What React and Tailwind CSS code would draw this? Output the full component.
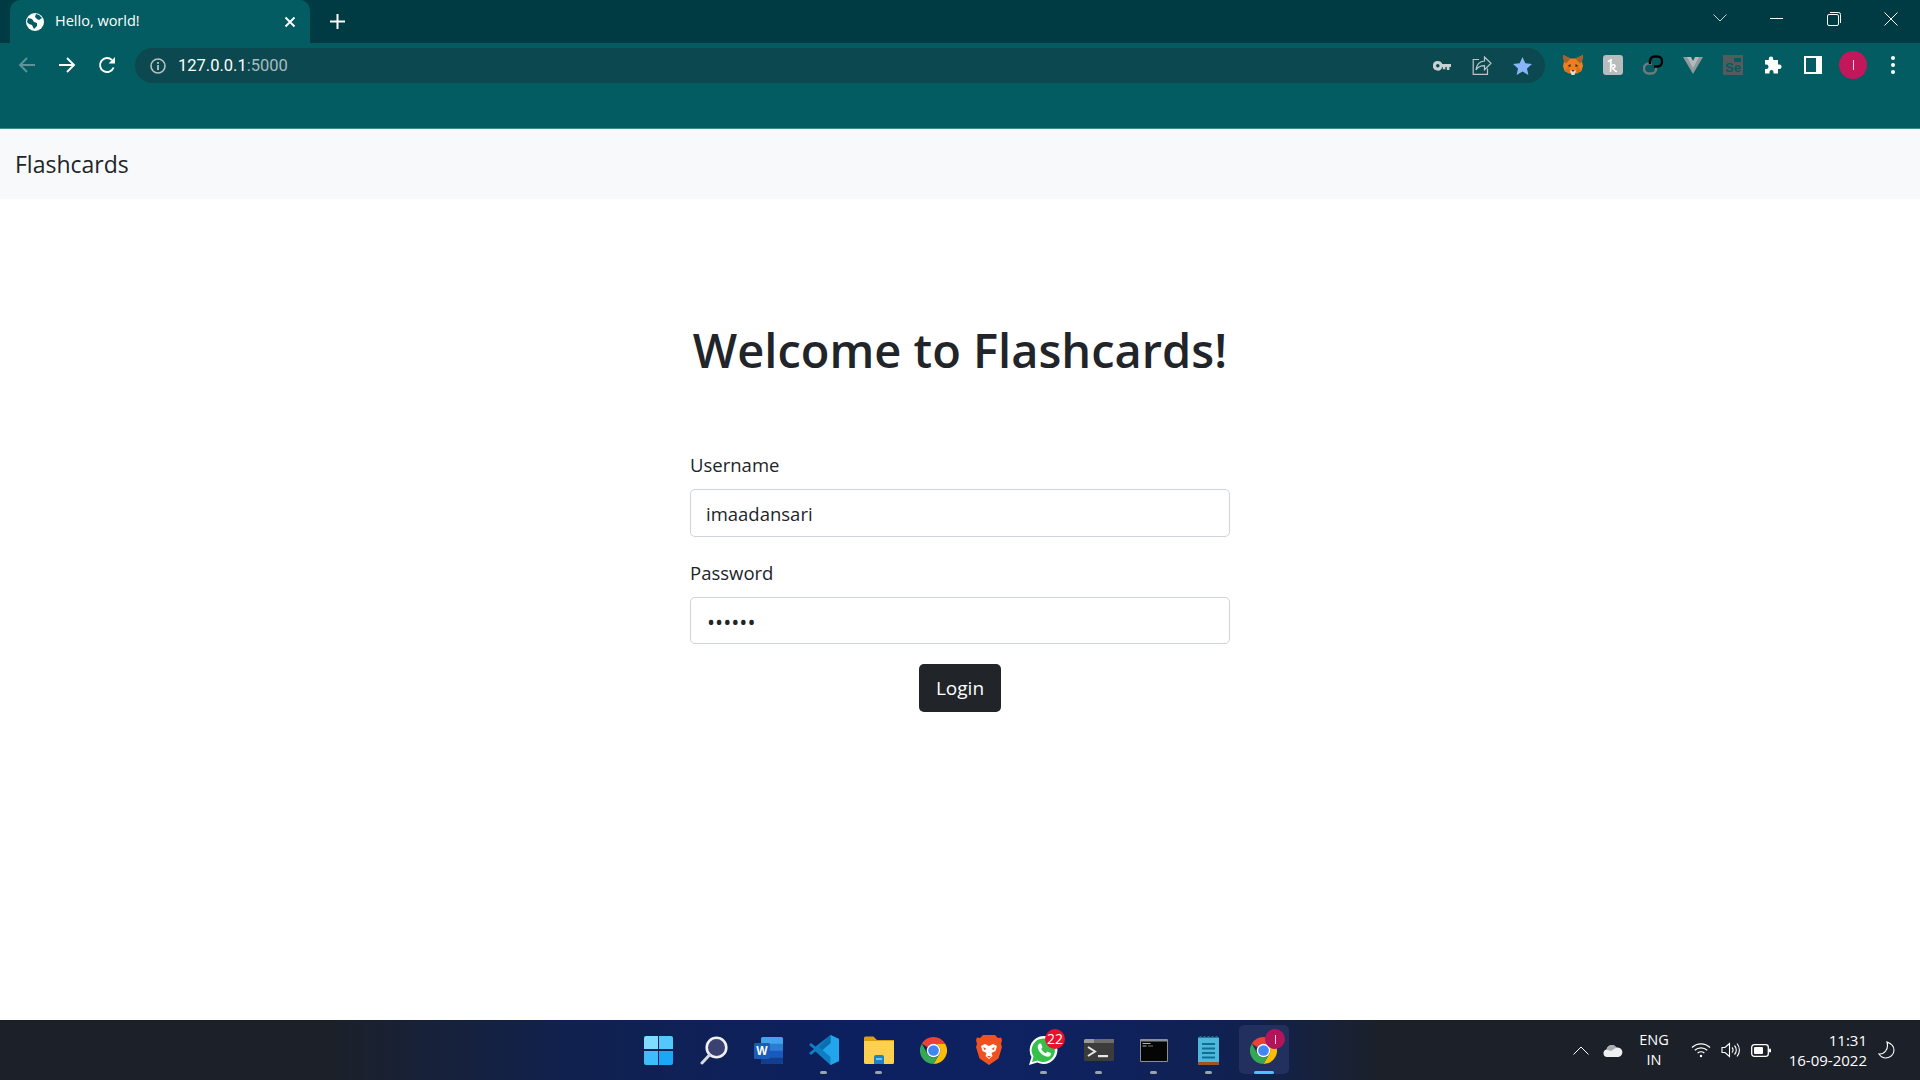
import React from "react";

function Btn({ children }) {
  return <div className="w-10 h-10 flex items-center justify-center shrink-0">{children}</div>;
}

function Back() {
  return (
    <svg width="18" height="18" viewBox="0 0 18 18" fill="none" stroke="#5f9398" strokeWidth="1.9">
      <path d="M17 9H2M9 2L2 9l7 7" />
    </svg>
  );
}
function Forward() {
  return (
    <svg width="18" height="18" viewBox="0 0 18 18" fill="none" stroke="#fff" strokeWidth="1.9">
      <path d="M1 9h15M9 2l7 7-7 7" />
    </svg>
  );
}
function Reload() {
  return (
    <svg width="18" height="18" viewBox="0 0 18 18" fill="none">
      <path d="M15.6 11.5A7 7 0 1 1 14 4.1" stroke="#fff" strokeWidth="1.9" />
      <path d="M17 1v6.4h-6.4z" fill="#fff" />
    </svg>
  );
}
function Globe() {
  return (
    <svg width="18" height="18" viewBox="0 0 18 18">
      <circle cx="9" cy="9" r="9" fill="#fff" />
      <path d="M2 5l4 1 2 3 3 1 0 3-3 3-2-4-3-1-2-2zM10 1l3 1 3 3-3 2-2-1-2-2z" fill="#035c62" />
    </svg>
  );
}
function Info() {
  return (
    <svg width="16" height="16" viewBox="0 0 16 16" fill="none">
      <circle cx="8" cy="8" r="7" stroke="#b4c2c4" strokeWidth="1.6" />
      <rect x="7.1" y="7" width="1.8" height="5" fill="#b4c2c4" />
      <rect x="7.1" y="4" width="1.8" height="1.8" fill="#b4c2c4" />
    </svg>
  );
}
function Key() {
  return (
    <svg width="18" height="10" viewBox="0 0 18 10">
      <path fillRule="evenodd" d="M4.8 0a4.8 4.8 0 0 1 4.5 3H18v3h-1.6v3h-2.6V6h-1.4v2.2H9.8V6h-.5a4.8 4.8 0 1 1-4.5-6zm0 3a1.8 1.8 0 1 0 0 3.6 1.8 1.8 0 0 0 0-3.6z" fill="#c8d0d1" />
    </svg>
  );
}
function Share() {
  return (
    <svg width="20" height="19" viewBox="0 0 20 19" fill="none" stroke="#b9c6c7" strokeWidth="1.2">
      <path d="M7 3.5H1.2v14.8h14.3V12.5" />
      <path d="M12.5 1v4C7.5 5.4 4.5 8.5 4 14c2-3.3 4.5-4.3 8.5-4.3v4L19 7.3z" />
    </svg>
  );
}
function Star() {
  return (
    <svg width="19" height="18" viewBox="0 0 19 18">
      <path d="M9.5 0l2.8 6.2 6.7.7-5 4.500 1.400 6.600-5.900-3.400L3.600 18 5 11.400 0 6.900l6.700-.7z" fill="#8ab4f8" />
    </svg>
  );
}
function Fox() {
  return (
    <svg width="20" height="20" viewBox="0 0 20 20">
      <path d="M0 0l7.500 3.500h5L20 0l-1 6.500 1 4.500-1.500 5-4.500 2.500H6L1.500 16 0 11l1-4.500z" fill="#ee7f1f" />
      <path d="M0 0l7.500 3.500L3 8.500 1 6.500zM20 0l-7.500 3.500 4.500 5 2-2z" fill="#a8612a" />
      <path d="M7.500 12L4.500 11l3-2zM12.500 12l3-1-3-2z" fill="#3a2a1d" />
      <path d="M7 15.500h6L11.500 20h-3z" fill="#e8dccf" />
      <path d="M8.500 15h3L10 17z" fill="#3a2a1d" />
      <path d="M1.500 16L6 11l1 7zM18.500 16L14 11l-1 7z" fill="#d9701a" />
    </svg>
  );
}
function HExt() {
  return (
    <div className="w-5 h-5 rounded-[3px] bg-[#b8bcbc] flex items-center justify-center">
      <svg width="12" height="15" viewBox="0 0 12 15" fill="none" stroke="#fff" strokeWidth="1.6">
        <path d="M1 4c1-2 2-2 4-2M4 1l-.5 13M3.500 9C5 6.500 8 6 8 8c0 1.500-2 2-3 2 2 .5 2.500 4 5 3.500" />
      </svg>
    </div>
  );
}
function LinkExt() {
  return (
    <svg width="20" height="20" viewBox="0 0 20 20" fill="none" strokeWidth="2.4">
      <path d="M13 11.500v2.500a4.500 4.500 0 0 1-4.500 4.500h-3A4.500 4.500 0 0 1 1 14v-1a4.500 4.500 0 0 1 4.500-4.500H9" stroke="#6f7a7c" />
      <path d="M7 9V6a4.500 4.500 0 0 1 4.500-4.500h3A4.500 4.500 0 0 1 19 6v1a4.500 4.500 0 0 1-4.500 4.500H11" stroke="#000" />
    </svg>
  );
}
function VExt() {
  return (
    <svg width="20" height="18" viewBox="0 0 20 18">
      <path d="M0 1h5l5 8 5-8h5L10 18z" fill="#8f9a9b" />
      <path d="M4 1h4l2 4 2-4h4l-6 11z" fill="#b5bbbc" />
    </svg>
  );
}
function SeExt() {
  return (
    <div className="w-5 h-5 bg-[#535b5d] relative flex items-end justify-center overflow-hidden">
      <div className="absolute top-[3px] right-[2px] w-[7px] h-[4px] bg-[#035c62]" />
      <span className="text-[#035c62] text-[13px] leading-[15px] font-bold font-['Liberation_Sans',sans-serif]">Se</span>
    </div>
  );
}
function Puzzle() {
  return (
    <svg width="18" height="18" viewBox="0 0 18 18">
      <path d="M7 .5a2.200 2.200 0 0 1 2.200 2.200V4H14v4.500h1.300a2.300 2.300 0 0 1 0 4.600H14V17.500H9.500V16a2 2 0 0 0-4 0v1.500H1V13h1.300a2.200 2.200 0 0 0 0-4.500H1V4h3.800V2.700A2.200 2.200 0 0 1 7 .5z" fill="#fff" />
    </svg>
  );
}
function Panel() {
  return (
    <div className="w-[18px] h-[18px] bg-white p-[2px] flex">
      <div className="w-[10px] bg-[#035c62]" />
    </div>
  );
}
function Dots() {
  return (
    <div className="flex flex-col gap-[3px]">
      <div className="w-1 h-1 rounded-full bg-white" />
      <div className="w-1 h-1 rounded-full bg-white" />
      <div className="w-1 h-1 rounded-full bg-white" />
    </div>
  );
}

function WinLogo() {
  return (
    <div className="grid grid-cols-2 gap-[1.5px] w-[29px] h-[29px]">
      <div className="bg-[#7fdcff] rounded-tl-[2px]" />
      <div className="bg-[#55c8fb] rounded-tr-[2px]" />
      <div className="bg-[#3fbcfb] rounded-bl-[2px]" />
      <div className="bg-[#1aa7f7] rounded-br-[2px]" />
    </div>
  );
}
function SearchIcon() {
  return (
    <svg width="28" height="29" viewBox="0 0 28 29" fill="none">
      <circle cx="16.5" cy="11.5" r="9.8" fill="#3b4272" stroke="#eef0f2" strokeWidth="2.6" />
      <path d="M9.5 19L2 27" stroke="#d8dade" strokeWidth="3" strokeLinecap="round" />
    </svg>
  );
}
function WordIcon() {
  return (
    <svg width="29" height="27" viewBox="0 0 29 27">
      <rect x="7" y="0" width="22" height="27" rx="1.5" fill="#41a5ee" />
      <rect x="7" y="6.75" width="22" height="6.75" fill="#2b7cd3" />
      <rect x="7" y="13.5" width="22" height="6.75" fill="#185abd" />
      <path d="M7 20.25h22V25.5a1.500 1.500 0 0 1-1.500 1.500H8.500A1.500 1.500 0 0 1 7 25.500z" fill="#103f91" />
      <rect x="0" y="6" width="16" height="16" rx="1.5" fill="#1a5cba" />
      <text x="8" y="18" textAnchor="middle" fontSize="12" fontWeight="700" fill="#fff" fontFamily="Liberation Sans">W</text>
    </svg>
  );
}
function VSCode() {
  return (
    <svg width="30" height="30" viewBox="0 0 30 30">
      <path d="M21.5 0L30 4v22l-8.500 4-15-13.500L2 20 0 18l5-4-5-4 2-2 4.500 3.500z" fill="#0f7fc4" />
      <path d="M21.5 0L30 4v22l-8.500 4zM21.500 8l-8 7 8 7z" fill="#23a5ec" fillRule="evenodd" />
      <path d="M21.5 0v8l-8 7-3.500-3z" fill="#0a6fb0" />
    </svg>
  );
}
function Folder() {
  return (
    <svg width="30" height="28" viewBox="0 0 30 28">
      <path d="M0 2A1.500 1.500 0 0 1 1.500.5h8L13 4h17v6H0z" fill="#dba00c" />
      <path d="M0 5h30v21.500a1.500 1.500 0 0 1-1.500 1.500h-27A1.500 1.500 0 0 1 0 26.500z" fill="#fdd04f" />
      <path d="M10 21a2 2 0 0 1 2-2h6a2 2 0 0 1 2 2v7H10z" fill="#1d83c4" />
      <rect x="12" y="22" width="6" height="2" fill="#6ec6ee" />
    </svg>
  );
}
function Chrome({ size = 27 }) {
  return (
    <svg width={size} height={size} viewBox="0 0 48 48">
      <path d="M24 0a24 24 0 0 1 20.800 12H24a12 12 0 0 0-10.400 6L3.200 12A24 24 0 0 1 24 0z" fill="#ea4335" />
      <path d="M44.800 12A24 24 0 0 1 24 48l10.400-18A12 12 0 0 0 34.400 18 12 12 0 0 0 24 12z" fill="#fbbc04" />
      <path d="M3.200 12l10.400 18A12 12 0 0 0 24 36a12 12 0 0 0 10.400-6L24 48A24 24 0 0 1 3.200 12z" fill="#34a853" />
      <circle cx="24" cy="24" r="12" fill="#fff" />
      <circle cx="24" cy="24" r="9.5" fill="#4285f4" />
    </svg>
  );
}
function Brave() {
  return (
    <svg width="26" height="30" viewBox="0 0 26 30">
      <path d="M7 0h12l3 3 3-.5L26 5l-1 4 1 3-3.500 11.500L13 30 3.500 23.500 0 12l1-3-1-4 1-2.500L4 3z" fill="#f0521f" />
      <path d="M13 11L9 9l-4 2 1.500 5 4 2-1 3 3.500 3 3.500-3-1-3 4-2 1.500-5-4-2z" fill="#fff" />
      <path d="M7.500 12l3 2-2.500 1zM18.500 12l-3 2 2.500 1zM11 21h4l-2 2z" fill="#f0521f" />
    </svg>
  );
}
function WhatsApp() {
  return (
    <svg width="31" height="31" viewBox="0 0 31 31">
      <path d="M15.500 1A14 14 0 0 0 3.500 22L1 30l8.300-2.400A14 14 0 1 0 15.500 1z" fill="#fff" />
      <path d="M15.500 3.500A11.700 11.700 0 0 0 5.500 21.500L4 27l5.500-1.600A11.700 11.700 0 1 0 15.500 3.500z" fill="#35c04b" />
      <path d="M11 8.500h2l1.500 3.700-1.300 1.800c1 2 2.500 3.200 4.600 4.200l1.700-1.700 3.500 1.700-.5 2.300c-1 1.300-3 1.500-5 .7-3.500-1.300-6.300-4-7.500-7.500-.6-2.200-.2-4 1.500-5.200z" fill="#fff" />
    </svg>
  );
}
function Term() {
  return (
    <svg width="30" height="22" viewBox="0 0 30 22">
      <rect width="30" height="22" rx="1.5" fill="#3c3c3c" />
      <path d="M1.500 0H10v4H0V1.500A1.500 1.500 0 0 1 1.500 0z" fill="#9a9a9a" />
      <rect x="10" width="20" height="4" fill="#6d6d6d" />
      <path d="M4 8l7 4.500L4 17" stroke="#e8e8e8" strokeWidth="2" fill="none" />
      <rect x="14" y="16" width="10" height="2.2" fill="#e8e8e8" />
    </svg>
  );
}
function Cmd() {
  return (
    <svg width="28" height="23" viewBox="0 0 28 23">
      <rect width="28" height="23" rx="1" fill="#8b8f96" />
      <rect x="1" y="2.5" width="26" height="19.5" fill="#050505" />
      <path d="M2.500 4.500h8M2.500 7h4" stroke="#b5b5b5" strokeWidth="1" />
      <path d="M8 7h5" stroke="#777" strokeWidth="1" />
    </svg>
  );
}
function Notes() {
  return (
    <svg width="21" height="29" viewBox="0 0 21 29">
      <rect y="1.5" width="21" height="25.5" fill="#4db8dc" />
      <rect y="26" width="21" height="3" fill="#a5521e" />
      <path d="M1 1.500a1.500 1.500 0 0 1 3 0zM5 1.500a1.500 1.500 0 0 1 3 0zM9 1.500a1.500 1.500 0 0 1 3 0zM13 1.500a1.500 1.500 0 0 1 3 0zM17 1.500a1.500 1.500 0 0 1 3 0z" fill="#1a7f9e" />
      <path d="M4 8h13M4 12.500h13M4 17h13M4 21.500h13" stroke="#0f6f91" strokeWidth="2" />
    </svg>
  );
}

function Dock({ children, running }) {
  return (
    <div className="relative w-[55px] h-[60px] flex items-center justify-center shrink-0">
      {children}
      {running && <div className="absolute bottom-[6px] w-[7px] h-[3px] rounded-full bg-[#9aa3ae]" />}
    </div>
  );
}

export default function App() {
  return (
    <div className="h-screen w-full flex flex-col overflow-hidden bg-white font-['Open_Sans','Noto_Sans',sans-serif]">
      {/* Title bar */}
      <div className="h-[43px] shrink-0 bg-[#003a42] flex items-stretch">
        <div className="w-[300px] ml-[10px] bg-[#035c62] rounded-t-[10px] flex items-center pl-[16px] pr-[14px]">
          <Globe />
          <span className="ml-[11px] flex-1 text-white text-[14.5px] leading-none">Hello, world!</span>
          <svg width="12" height="12" viewBox="0 0 12 12" stroke="#fff" strokeWidth="1.9">
            <path d="M1.500 1.500l9 9M10.500 1.500l-9 9" />
          </svg>
        </div>
        <div className="ml-[20px] flex items-center">
          <svg width="15" height="15" viewBox="0 0 15 15" stroke="#fff" strokeWidth="2">
            <path d="M7.500 0v15M0 7.500h15" />
          </svg>
        </div>
        <div className="flex-1" />
        <div className="flex items-start pt-[12px] pr-[1px]">
          <div className="w-[57px] flex justify-center pt-[2px]">
            <svg width="14" height="8" viewBox="0 0 14 8" fill="none" stroke="#c9d6d8" strokeWidth="1">
              <path d="M.5.500L7 7l6.500-6.500" />
            </svg>
          </div>
          <div className="w-[57px] flex justify-center pt-[6px]">
            <div className="w-[13px] h-px bg-white" />
          </div>
          <div className="w-[57px] flex justify-center">
            <svg width="14" height="14" viewBox="0 0 14 14" fill="none" stroke="#fff" strokeWidth="1">
              <rect x=".5" y="2.5" width="11" height="11" rx="1.5" />
              <path d="M3 .5h8.500a2 2 0 0 1 2 2V11" />
            </svg>
          </div>
          <div className="w-[57px] flex justify-center">
            <svg width="14" height="14" viewBox="0 0 14 14" stroke="#fff" strokeWidth="1">
              <path d="M.5.500l13 13M13.500.5l-13 13" />
            </svg>
          </div>
        </div>
      </div>

      {/* Toolbar */}
      <div className="h-[86px] shrink-0 bg-[#035c62] border-b border-[#3d8a8f] flex items-start pt-[2px] pl-[7px]">
        <Btn><Back /></Btn>
        <Btn><Forward /></Btn>
        <Btn><Reload /></Btn>
        <div className="ml-[8px] mt-[3px] w-[1410px] h-[35px] rounded-full bg-[#0c484f] flex items-center pl-[15px] shrink-0">
          <Info />
          <span className="ml-[12px] pt-[2px] text-[16.5px] leading-none text-white font-['Roboto',sans-serif]">
            127.0.0.1<span className="text-[#a9bcbf]">:5000</span>
          </span>
          <div className="flex-1" />
          <div className="flex items-center pr-[3px]">
            <Btn><Key /></Btn>
            <Btn><Share /></Btn>
            <Btn><Star /></Btn>
          </div>
        </div>
        <div className="ml-[8px] flex">
          <Btn><Fox /></Btn>
          <Btn><HExt /></Btn>
          <Btn><LinkExt /></Btn>
          <Btn><VExt /></Btn>
          <Btn><SeExt /></Btn>
          <Btn><Puzzle /></Btn>
          <Btn><Panel /></Btn>
          <Btn>
            <div className="w-7 h-7 rounded-full bg-[#c2185b] flex items-center justify-center">
              <span className="w-px h-[10px] bg-[#f6d5e3]" />
            </div>
          </Btn>
          <Btn><Dots /></Btn>
        </div>
      </div>

      {/* Page */}
      <nav className="h-[70px] shrink-0 bg-[#f8f9fa] flex items-center pl-[15px]">
        <span className="text-[23px] text-[#212529] leading-none">Flashcards</span>
      </nav>
      <main className="flex-1 flex flex-col items-center text-[#212529]">
        <h1 className="mt-[121px] text-[47px] leading-[60px] font-semibold">Welcome to Flashcards!</h1>
        <form className="mt-[70px] w-[540px] flex flex-col">
          <label className="text-[18.5px] leading-[30px] mb-[9px]">Username</label>
          <input readOnly value="imaadansari" className="h-[48px] px-[15px] text-[18.5px] border border-[#ced4da] rounded-[5px] outline-none" />
          <label className="mt-[21px] text-[18.5px] leading-[30px] mb-[9px]">Password</label>
          <input readOnly type="password" value="secret" className="h-[47px] pl-[16px] pr-[15px] pt-[1px] text-[21.5px] border border-[#ced4da] rounded-[5px] outline-none" />
          <button type="button" className="self-center mt-[20px] w-[82px] h-[48px] bg-[#212529] text-white text-[19px] rounded-[5px]">Login</button>
        </form>
      </main>

      {/* Taskbar */}
      <footer className="h-[60px] shrink-0 flex items-stretch bg-[linear-gradient(90deg,#1c2129_0%,#1c2129_17%,#10214f_30%,#0c2061_45%,#0f2260_55%,#10214f_65%,#1c2129_72%,#1c2129_100%)]">
        <div className="flex-1" />
        <div className="flex pl-[2px]">
          <Dock><WinLogo /></Dock>
          <Dock><SearchIcon /></Dock>
          <Dock><WordIcon /></Dock>
          <Dock running><VSCode /></Dock>
          <Dock running><Folder /></Dock>
          <Dock><Chrome /></Dock>
          <Dock><Brave /></Dock>
          <Dock running>
            <WhatsApp />
            <div className="absolute top-[9px] right-[6px] w-5 h-5 rounded-full bg-[#e8132a] flex items-center justify-center text-white text-[14px] leading-none">22</div>
          </Dock>
          <Dock running><Term /></Dock>
          <Dock running><Cmd /></Dock>
          <Dock running><Notes /></Dock>
          <div className="relative w-[55px] h-[60px] flex items-center justify-center shrink-0">
            <div className="absolute left-[3px] top-[5px] w-[50px] h-[49px] rounded-[5px] bg-[#22305f]" />
            <div className="relative"><Chrome /></div>
            <div className="absolute top-[9px] right-[6px] w-5 h-5 rounded-full bg-[#b3145a] flex items-center justify-center">
              <span className="w-px h-[9px] bg-[#f6d5e3]" />
            </div>
            <div className="absolute bottom-[6px] left-[18px] w-5 h-[3px] rounded-full bg-[#4cc2ff]" />
          </div>
        </div>
        <div className="flex-1 flex items-center justify-end text-white">
          <svg width="16" height="9" viewBox="0 0 16 9" fill="none" stroke="#fff" strokeWidth="1">
            <path d="M.5 8.500L8 1l7.500 7.500" />
          </svg>
          <svg className="ml-[14px]" width="20" height="13" viewBox="0 0 20 13">
            <path d="M4 13a3.800 3.800 0 0 1-.5-7.500A5.500 5.500 0 0 1 13.500 3.500 4.800 4.800 0 0 1 15.500 13z" fill="#eef0f2" />
            <path d="M3.500 5.500A5.500 5.500 0 0 1 13.500 3.500L8 7z" fill="#a8adb3" />
          </svg>
          <div className="ml-[14px] w-[34px] text-center text-[14.5px] leading-[20px]">
            <div>ENG</div>
            <div>IN</div>
          </div>
          <svg className="ml-[20px]" width="20" height="16" viewBox="0 0 20 16" fill="none" stroke="#fff" strokeWidth="1.2">
            <path d="M1 5.500a13 13 0 0 1 18 0M3.800 8.300a9 9 0 0 1 12.400 0M6.600 11.100a5 5 0 0 1 6.800 0" />
            <circle cx="10" cy="14" r="1.2" fill="#fff" stroke="none" />
          </svg>
          <svg className="ml-[10px]" width="20" height="16" viewBox="0 0 20 16" fill="none" stroke="#fff" strokeWidth="1.1">
            <path d="M1 5.500h3L8.500 1.500v13L4 10.500H1z" />
            <path d="M11 5.500a3.500 3.500 0 0 1 0 5M13.500 3.500a6.500 6.500 0 0 1 0 9M16 1.500a10 10 0 0 1 0 13" />
          </svg>
          <svg className="ml-[10px]" width="20" height="13" viewBox="0 0 20 13" fill="none">
            <rect x=".7" y=".7" width="16.6" height="11.6" rx="2.5" stroke="#fff" strokeWidth="1.3" />
            <rect x="3" y="3" width="9" height="7" rx="1" fill="#fff" />
            <rect x="18" y="4.500" width="2" height="4" rx="1" fill="#fff" />
          </svg>
          <div className="ml-[16px] w-[80px] text-right text-[15px] leading-[20px] shrink-0">
            <div>11:31</div>
            <div>16-09-2022</div>
          </div>
          <svg className="ml-[11px] mr-[25px]" width="17" height="18" viewBox="0 0 17 18" fill="none" stroke="#fff" strokeWidth="1.1">
            <path d="M9 1c4 1.500 7 4.500 7 8 0 4.500-3.500 8-8 8-3 0-5.500-1.500-7-4 5 .5 10-4.500 8-12z" />
          </svg>
        </div>
      </footer>
    </div>
  );
}
